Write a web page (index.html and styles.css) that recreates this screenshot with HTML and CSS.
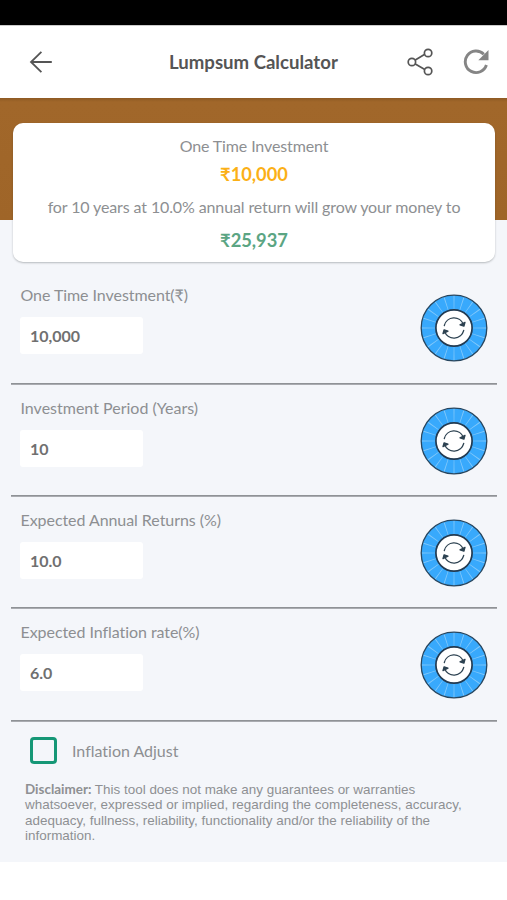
FILE: index.html
```html
<!DOCTYPE html>
<html lang="en">
<head>
<meta charset="utf-8">
<title>Lumpsum Calculator</title>
<link rel="stylesheet" href="styles.css">
</head>
<body>
<svg class="defs" width="0" height="0" aria-hidden="true">
  <symbol id="dial" viewBox="0 0 68 68">
    <circle cx="34" cy="34" r="32.8" fill="#38a9fc" stroke="#27465f" stroke-width="1.3"/>
    <circle cx="34" cy="34" r="25.5" fill="none" stroke="#82c8fa" stroke-width="13" stroke-dasharray=".8 7.211" stroke-dashoffset=".4" pathLength="160.22"/>
    <circle cx="34" cy="34" r="18.1" fill="#fff" stroke="#233b52" stroke-width="1.7"/>
    <g fill="none" stroke="#2d4251" stroke-width="1.3" stroke-linecap="round" stroke-linejoin="round">
      <path d="M24.3 31.5A10 10 0 0 1 43.4 30.5M43.7 36.5A10 10 0 0 1 24.6 37.5"/>
      <path fill="#2d4251" d="M40 30.8L43.9 32.2L45 28.4ZM28 37.2L24.1 35.8L23 39.6Z"/>
    </g>
  </symbol>
</svg>
<div class="status"></div>
<header class="bar">
  <svg class="back" viewBox="0 0 24 24"><path d="M12.4 1.8L2 12L12.4 22.2M2 12H22.8"/></svg>
  <h1>Lumpsum Calculator</h1>
  <svg class="share" viewBox="0 0 26 28"><path d="M7.9 12.2L17.8 6.2M7.9 15.8L17.8 21.4"/><circle cx="4.9" cy="14" r="3.7"/><circle cx="21.1" cy="5" r="3.7"/><circle cx="21.1" cy="23" r="3.7"/></svg>
  <svg class="reload" viewBox="0 0 26 26"><path class="arc" d="M20.8 5.2A10.8 10.8 0 1 0 23.4 16"/><path class="head" d="M25.5 1V11.2H15.3Z"/></svg>
</header>
<main>
  <section class="hero">
    <div class="card">
      <p class="caption">One Time Investment</p>
      <p class="amount invested">₹10,000</p>
      <p class="caption detail">for 10 years at 10.0% annual return will grow your money to</p>
      <p class="amount result">₹25,937</p>
    </div>
  </section>
  <section class="fields">
    <div class="row">
      <div><div class="label">One Time Investment(₹)</div><div class="value">10,000</div></div>
      <svg class="dial"><use href="#dial"/></svg>
    </div>
    <div class="row">
      <div><div class="label period">Investment Period (Years)</div><div class="value">10</div></div>
      <svg class="dial"><use href="#dial"/></svg>
    </div>
    <div class="row">
      <div><div class="label">Expected Annual Returns (%)</div><div class="value">10.0</div></div>
      <svg class="dial"><use href="#dial"/></svg>
    </div>
    <div class="row">
      <div><div class="label">Expected Inflation rate(%)</div><div class="value">6.0</div></div>
      <svg class="dial"><use href="#dial"/></svg>
    </div>
  </section>
  <div class="adjust"><span class="box"></span><span>Inflation Adjust</span></div>
  <p class="disclaimer"><b>Disclaimer:</b> This tool does not make any guarantees or warranties<br>whatsoever, expressed or implied, regarding the completeness, accuracy,<br>adequacy, fullness, reliability, functionality and/or the reliability of the<br>information.</p>
</main>
</body>
</html>
```
FILE: styles.css
```css
* { box-sizing: border-box; }
body { margin: 0; background: #fff; color: #8d8f92; font-family: Lato, "Noto Sans", sans-serif; }
h1, p { margin: 0; }
.defs { display: block; }
.status { height: 25px; background: #000; }
.bar { height: 73px; display: flex; align-items: center; border-top: 1px solid #ccc; background: #fff; }
.bar svg { flex: none; fill: none; stroke: #555; }
.back { width: 24px; height: 24px; margin-left: 29px; stroke-width: 1.8; }
.bar h1 { flex: 1; padding-left: 116px; font-size: 18.6px; line-height: 24px; color: #555; white-space: nowrap; }
.share { width: 26px; height: 28px; margin-right: 30px; stroke-width: 1.7; }
.reload { width: 26px; height: 26px; margin-right: 18px; }
.bar .arc { stroke: #858585; stroke-width: 2.9; }
.bar .head { fill: #858585; stroke: none; }
main { height: 764px; background: #f4f6fa; }
.hero { height: 173px; padding: 25px 12px 0 13px; background: linear-gradient(#8e5a24 0, #a1672a 4px, #9f6528 122.5px, transparent 122.5px); }
.card { height: 139px; border-radius: 10px; background: #fff; text-align: center; box-shadow: 0 1px 2px rgba(40, 45, 50, .3); }
.caption { padding-top: 12px; font-size: 16px; line-height: 22px; letter-spacing: -.12px; }
.amount { font-weight: 700; font-size: 18.3px; line-height: 24px; }
.invested { padding-top: 5px; color: #fbb016; }
.detail { padding-top: 10px; white-space: nowrap; }
.result { padding-top: 10px; color: #5ba583; }
.fields { display: grid; grid-template-rows: 114px 112px 112px 113px; padding: 0 10px 0 11px; }
.row { display: flex; justify-content: space-between; padding: 12px 9px 0; background: linear-gradient(#8f9296 50%, #a9abb0 50%) left bottom / 100% 2px no-repeat; }
.row:first-child { padding-top: 13px; }
.label { padding-left: .5px; font-size: 16px; line-height: 22px; white-space: nowrap; letter-spacing: -.06px; }
.period { letter-spacing: 0; }
.value { width: 123px; height: 37px; margin-top: 11px; padding-left: 10px; border-radius: 3px; background: #fff; font-size: 16px; font-weight: 700; line-height: 38px; color: #707070; }
.dial { width: 68px; height: 68px; margin-top: 10px; }
.adjust { display: flex; align-items: center; height: 56px; padding-left: 30px; gap: 15px; font-size: 16px; letter-spacing: -.01px; }
.box { width: 27px; height: 27px; border: 3px solid #159776; border-radius: 4px; }
.disclaimer { padding: 4px 0 0 25px; font: 13.45px/15.4px "Liberation Sans", sans-serif; white-space: nowrap; color: #8e9093; }
.disclaimer b { font-family: Lato, sans-serif; }
```
